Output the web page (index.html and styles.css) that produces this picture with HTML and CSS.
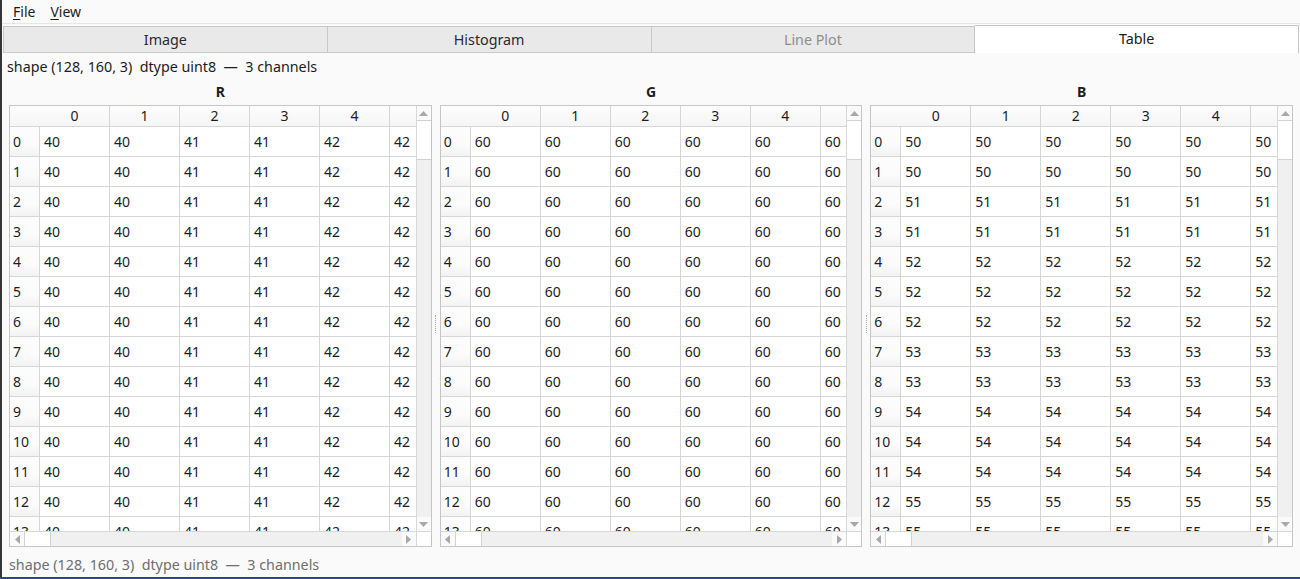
FILE: index.html
```html
<!DOCTYPE html>
<html lang="en">
<head>
  <meta charset="UTF-8" />
  <title>Array Viewer</title>
  <link rel="stylesheet" href="styles.css">
</head>
<body>
<div class="window">

  <div class="menubar">
    <span class="menu"><u>F</u>ile</span>
    <span class="menu"><u>V</u>iew</span>
  </div>

  <div class="tabbar">
    <div class="tab">Image</div>
    <div class="tab">Histogram</div>
    <div class="tab dim">Line Plot</div>
    <div class="tab active">Table</div>
  </div>

  <div class="page">
    <div class="info">shape (128, 160, 3)  dtype uint8  —  3 channels</div>

    <div class="channels">

      <!-- R -->
      <div class="channel">
        <div class="channel-title">R</div>
        <div class="frame">
          <div class="viewport">
            <table class="grid">
              <colgroup><col class="rh"><col class="c"><col class="c"><col class="c"><col class="c"><col class="c"><col class="c"></colgroup>
              <thead><tr><th class="corner-head"></th><th>0</th><th>1</th><th>2</th><th>3</th><th>4</th><th></th></tr></thead>
              <tbody>
                <tr><th>0</th><td>40</td><td>40</td><td>41</td><td>41</td><td>42</td><td>42</td></tr>
                <tr><th>1</th><td>40</td><td>40</td><td>41</td><td>41</td><td>42</td><td>42</td></tr>
                <tr><th>2</th><td>40</td><td>40</td><td>41</td><td>41</td><td>42</td><td>42</td></tr>
                <tr><th>3</th><td>40</td><td>40</td><td>41</td><td>41</td><td>42</td><td>42</td></tr>
                <tr><th>4</th><td>40</td><td>40</td><td>41</td><td>41</td><td>42</td><td>42</td></tr>
                <tr><th>5</th><td>40</td><td>40</td><td>41</td><td>41</td><td>42</td><td>42</td></tr>
                <tr><th>6</th><td>40</td><td>40</td><td>41</td><td>41</td><td>42</td><td>42</td></tr>
                <tr><th>7</th><td>40</td><td>40</td><td>41</td><td>41</td><td>42</td><td>42</td></tr>
                <tr><th>8</th><td>40</td><td>40</td><td>41</td><td>41</td><td>42</td><td>42</td></tr>
                <tr><th>9</th><td>40</td><td>40</td><td>41</td><td>41</td><td>42</td><td>42</td></tr>
                <tr><th>10</th><td>40</td><td>40</td><td>41</td><td>41</td><td>42</td><td>42</td></tr>
                <tr><th>11</th><td>40</td><td>40</td><td>41</td><td>41</td><td>42</td><td>42</td></tr>
                <tr><th>12</th><td>40</td><td>40</td><td>41</td><td>41</td><td>42</td><td>42</td></tr>
                <tr><th>13</th><td>40</td><td>40</td><td>41</td><td>41</td><td>42</td><td>42</td></tr>
              </tbody>
            </table>
          </div>
          <div class="vscroll">
            <div class="sbtn"><svg width="9" height="5" viewBox="0 0 9 5"><path d="M0 5 L4.5 0 L9 5 Z" fill="#a8a8a8"/></svg></div>
            <div class="vthumb"></div>
            <div class="vtrack"></div>
            <div class="sbtn"><svg width="9" height="5" viewBox="0 0 9 5"><path d="M0 0 L4.5 5 L9 0 Z" fill="#a8a8a8"/></svg></div>
          </div>
          <div class="hscroll">
            <div class="sbtn"><svg width="5" height="9" viewBox="0 0 5 9"><path d="M5 0 L0 4.5 L5 9 Z" fill="#a8a8a8"/></svg></div>
            <div class="hthumb"></div>
            <div class="htrack"></div>
            <div class="sbtn"><svg width="5" height="9" viewBox="0 0 5 9"><path d="M0 0 L5 4.5 L0 9 Z" fill="#a8a8a8"/></svg></div>
          </div>
          <div class="corner"></div>
        </div>
      </div>

      <div class="splitter"><span class="grip"></span></div>

      <!-- G -->
      <div class="channel">
        <div class="channel-title">G</div>
        <div class="frame">
          <div class="viewport">
            <table class="grid">
              <colgroup><col class="rh"><col class="c"><col class="c"><col class="c"><col class="c"><col class="c"><col class="c"></colgroup>
              <thead><tr><th class="corner-head"></th><th>0</th><th>1</th><th>2</th><th>3</th><th>4</th><th></th></tr></thead>
              <tbody>
                <tr><th>0</th><td>60</td><td>60</td><td>60</td><td>60</td><td>60</td><td>60</td></tr>
                <tr><th>1</th><td>60</td><td>60</td><td>60</td><td>60</td><td>60</td><td>60</td></tr>
                <tr><th>2</th><td>60</td><td>60</td><td>60</td><td>60</td><td>60</td><td>60</td></tr>
                <tr><th>3</th><td>60</td><td>60</td><td>60</td><td>60</td><td>60</td><td>60</td></tr>
                <tr><th>4</th><td>60</td><td>60</td><td>60</td><td>60</td><td>60</td><td>60</td></tr>
                <tr><th>5</th><td>60</td><td>60</td><td>60</td><td>60</td><td>60</td><td>60</td></tr>
                <tr><th>6</th><td>60</td><td>60</td><td>60</td><td>60</td><td>60</td><td>60</td></tr>
                <tr><th>7</th><td>60</td><td>60</td><td>60</td><td>60</td><td>60</td><td>60</td></tr>
                <tr><th>8</th><td>60</td><td>60</td><td>60</td><td>60</td><td>60</td><td>60</td></tr>
                <tr><th>9</th><td>60</td><td>60</td><td>60</td><td>60</td><td>60</td><td>60</td></tr>
                <tr><th>10</th><td>60</td><td>60</td><td>60</td><td>60</td><td>60</td><td>60</td></tr>
                <tr><th>11</th><td>60</td><td>60</td><td>60</td><td>60</td><td>60</td><td>60</td></tr>
                <tr><th>12</th><td>60</td><td>60</td><td>60</td><td>60</td><td>60</td><td>60</td></tr>
                <tr><th>13</th><td>60</td><td>60</td><td>60</td><td>60</td><td>60</td><td>60</td></tr>
              </tbody>
            </table>
          </div>
          <div class="vscroll">
            <div class="sbtn"><svg width="9" height="5" viewBox="0 0 9 5"><path d="M0 5 L4.5 0 L9 5 Z" fill="#a8a8a8"/></svg></div>
            <div class="vthumb"></div>
            <div class="vtrack"></div>
            <div class="sbtn"><svg width="9" height="5" viewBox="0 0 9 5"><path d="M0 0 L4.5 5 L9 0 Z" fill="#a8a8a8"/></svg></div>
          </div>
          <div class="hscroll">
            <div class="sbtn"><svg width="5" height="9" viewBox="0 0 5 9"><path d="M5 0 L0 4.5 L5 9 Z" fill="#a8a8a8"/></svg></div>
            <div class="hthumb"></div>
            <div class="htrack"></div>
            <div class="sbtn"><svg width="5" height="9" viewBox="0 0 5 9"><path d="M0 0 L5 4.5 L0 9 Z" fill="#a8a8a8"/></svg></div>
          </div>
          <div class="corner"></div>
        </div>
      </div>

      <div class="splitter"><span class="grip"></span></div>

      <!-- B -->
      <div class="channel">
        <div class="channel-title">B</div>
        <div class="frame">
          <div class="viewport">
            <table class="grid">
              <colgroup><col class="rh"><col class="c"><col class="c"><col class="c"><col class="c"><col class="c"><col class="c"></colgroup>
              <thead><tr><th class="corner-head"></th><th>0</th><th>1</th><th>2</th><th>3</th><th>4</th><th></th></tr></thead>
              <tbody>
                <tr><th>0</th><td>50</td><td>50</td><td>50</td><td>50</td><td>50</td><td>50</td></tr>
                <tr><th>1</th><td>50</td><td>50</td><td>50</td><td>50</td><td>50</td><td>50</td></tr>
                <tr><th>2</th><td>51</td><td>51</td><td>51</td><td>51</td><td>51</td><td>51</td></tr>
                <tr><th>3</th><td>51</td><td>51</td><td>51</td><td>51</td><td>51</td><td>51</td></tr>
                <tr><th>4</th><td>52</td><td>52</td><td>52</td><td>52</td><td>52</td><td>52</td></tr>
                <tr><th>5</th><td>52</td><td>52</td><td>52</td><td>52</td><td>52</td><td>52</td></tr>
                <tr><th>6</th><td>52</td><td>52</td><td>52</td><td>52</td><td>52</td><td>52</td></tr>
                <tr><th>7</th><td>53</td><td>53</td><td>53</td><td>53</td><td>53</td><td>53</td></tr>
                <tr><th>8</th><td>53</td><td>53</td><td>53</td><td>53</td><td>53</td><td>53</td></tr>
                <tr><th>9</th><td>54</td><td>54</td><td>54</td><td>54</td><td>54</td><td>54</td></tr>
                <tr><th>10</th><td>54</td><td>54</td><td>54</td><td>54</td><td>54</td><td>54</td></tr>
                <tr><th>11</th><td>54</td><td>54</td><td>54</td><td>54</td><td>54</td><td>54</td></tr>
                <tr><th>12</th><td>55</td><td>55</td><td>55</td><td>55</td><td>55</td><td>55</td></tr>
                <tr><th>13</th><td>55</td><td>55</td><td>55</td><td>55</td><td>55</td><td>55</td></tr>
              </tbody>
            </table>
          </div>
          <div class="vscroll">
            <div class="sbtn"><svg width="9" height="5" viewBox="0 0 9 5"><path d="M0 5 L4.5 0 L9 5 Z" fill="#a8a8a8"/></svg></div>
            <div class="vthumb"></div>
            <div class="vtrack"></div>
            <div class="sbtn"><svg width="9" height="5" viewBox="0 0 9 5"><path d="M0 0 L4.5 5 L9 0 Z" fill="#a8a8a8"/></svg></div>
          </div>
          <div class="hscroll">
            <div class="sbtn"><svg width="5" height="9" viewBox="0 0 5 9"><path d="M5 0 L0 4.5 L5 9 Z" fill="#a8a8a8"/></svg></div>
            <div class="hthumb"></div>
            <div class="htrack"></div>
            <div class="sbtn"><svg width="5" height="9" viewBox="0 0 5 9"><path d="M0 0 L5 4.5 L0 9 Z" fill="#a8a8a8"/></svg></div>
          </div>
          <div class="corner"></div>
        </div>
      </div>

    </div>
  </div>

  <div class="statusbar">shape (128, 160, 3)  dtype uint8  —  3 channels</div>
</div>
<div class="desktop"></div>
</body>
</html>
```

FILE: styles.css
```css
body {
  margin: 0;
  font-family: "Noto Sans", "DejaVu Sans", sans-serif;
  font-size: 14px;
  color: #1c1c1c;
  background-color: #2b4470;
  overflow: hidden;
}

.window {
  height: 577px;
  background-color: #fafafa;
  border-left: 2px solid #353535;
  display: flex;
  flex-direction: column;
}

.desktop {
  height: 2px;
  background-color: #2f4a78;
}

/* Menu */
.menubar {
  height: 23px;
  border-bottom: 1px solid #e6e6e6;
  display: flex;
  align-items: center;
  padding-left: 11px;
}

.menu {
  margin-right: 15px;
  line-height: 20px;
}

.menu u {
  text-decoration-thickness: 1px;
  text-underline-offset: 2px;
}

/* Tabs */
.tabbar {
  height: 29px;
  display: flex;
  align-items: flex-end;
  padding: 0 1px 0 1px;
}

.tab {
  flex: 1;
  height: 25px;
  background-color: #e9e9e9;
  border: 1px solid #c8c8c8;
  border-right: none;
  display: flex;
  align-items: center;
  justify-content: center;
  color: #2a2a2a;
  font-size: 14.3px;
}

.tab.dim {
  color: #8d8d8d;
}

.tab.active {
  height: 28px;
  background-color: #ffffff;
  border: 1px solid #c4c4c4;
  border-bottom: none;
  border-radius: 2px 2px 0 0;
  color: #1a1a1a;
  padding-bottom: 3px;
  box-sizing: border-box;
}

/* Page */
.page {
  height: 499px;
  padding: 4px 7px 5px 7px;
  box-sizing: border-box;
  display: flex;
  flex-direction: column;
}

.info {
  height: 20px;
  line-height: 20px;
  margin-left: -2px;
  margin-bottom: 3px;
  white-space: pre;
  font-size: 14.3px;
}

.channels {
  display: flex;
  flex: 1;
}

.channel {
  flex: 1;
  min-width: 0;
  display: flex;
  flex-direction: column;
}

.channel-title {
  height: 25px;
  line-height: 24px;
  text-align: center;
  font-weight: bold;
}

.splitter {
  width: 8px;
  display: flex;
  align-items: center;
  justify-content: center;
  padding-top: 20px;
}

.grip {
  display: block;
  height: 18px;
  border-left: 1px dotted #a9a9a9;
}

/* Table frame */
.frame {
  height: 442px;
  box-sizing: border-box;
  border: 1px solid #c6c6c6;
  background-color: #ffffff;
  display: grid;
  grid-template-columns: 1fr 15px;
  grid-template-rows: 1fr 15px;
}

.viewport {
  overflow: hidden;
  min-width: 0;
}

.grid {
  table-layout: fixed;
  border-collapse: separate;
  border-spacing: 0;
  width: 450px;
}

.grid col.rh {
  width: 30px;
}

.grid col.c {
  width: 70px;
}

.grid th,
.grid td {
  box-sizing: border-box;
  border-right: 1px solid #d6d6d6;
  border-bottom: 1px solid #d6d6d6;
  font-weight: normal;
  white-space: nowrap;
  overflow: hidden;
  padding: 0;
  line-height: 18px;
}

.grid thead th {
  height: 21px;
  padding: 1px 0;
  text-align: center;
  background: linear-gradient(#fdfdfd, #f5f5f5);
  color: #1c1c1c;
}

.grid thead th.corner-head {
  border-right: none;
}

.grid tbody th {
  height: 30px;
  text-align: left;
  padding-left: 3px;
  background: linear-gradient(#fcfcfc 60%, #f2f2f2);
}

.grid td {
  height: 30px;
  padding-left: 4px;
  background-color: #ffffff;
}

/* Scrollbars */
.vscroll {
  border-left: 1px solid #d8d8d8;
  display: flex;
  flex-direction: column;
  background-color: #f0f0f0;
}

.hscroll {
  border-top: 1px solid #d8d8d8;
  display: flex;
  background-color: #f0f0f0;
}

.sbtn {
  width: 14px;
  height: 14px;
  flex-shrink: 0;
  display: flex;
  align-items: center;
  justify-content: center;
  background-color: #fafafa;
}

.vthumb {
  height: 38px;
  flex-shrink: 0;
  background-color: #ffffff;
  border-top: 1px solid #d2d2d2;
  border-bottom: 1px solid #d2d2d2;
}

.vtrack,
.htrack {
  flex: 1;
}

.hthumb {
  width: 25px;
  flex-shrink: 0;
  background-color: #ffffff;
  border-left: 1px solid #d2d2d2;
  border-right: 1px solid #d2d2d2;
}

.corner {
  border-left: 1px solid #d8d8d8;
  border-top: 1px solid #d8d8d8;
  background-color: #ffffff;
}

/* Status */
.statusbar {
  height: 25px;
  line-height: 25px;
  padding-left: 7px;
  color: #6f6f6f;
  white-space: pre;
  font-size: 14.3px;
}
```
